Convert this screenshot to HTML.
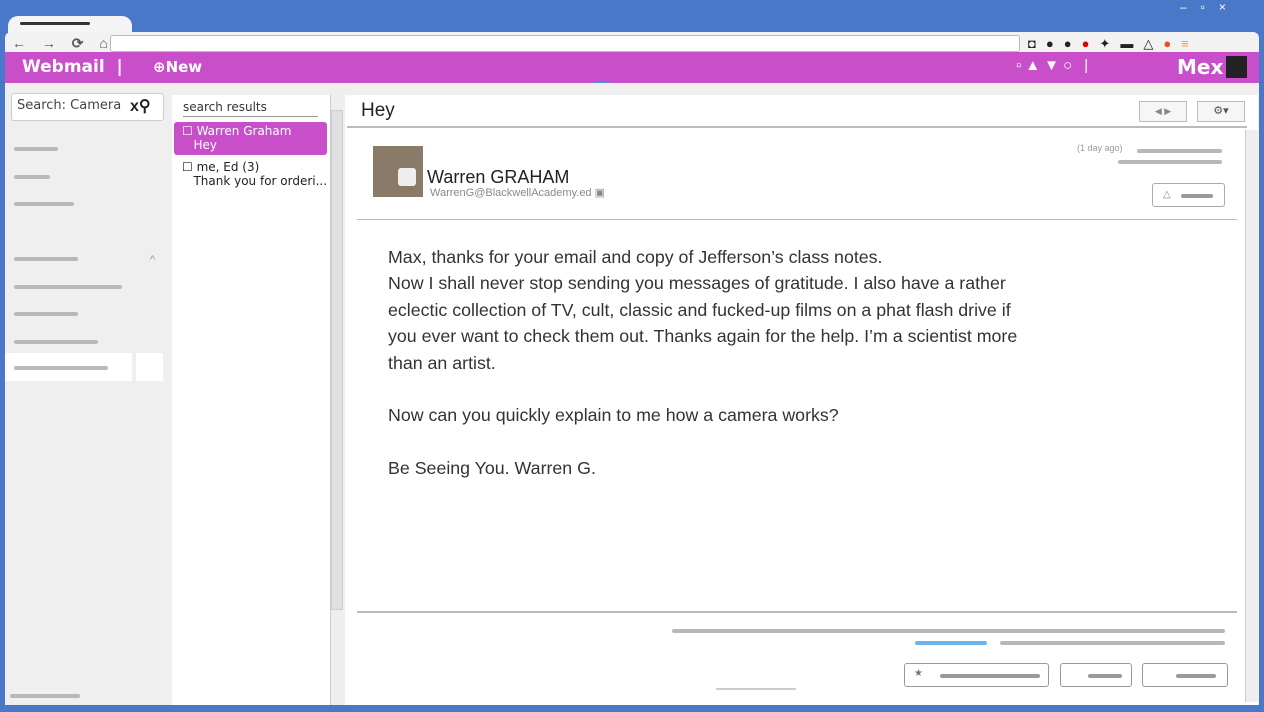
<!DOCTYPE html>
<html><head><style>
*{margin:0;padding:0;box-sizing:border-box}
body{width:1264px;height:712px;background:#4a78c8;position:relative;overflow:hidden;font-family:"Liberation Sans",sans-serif}
.a{position:absolute}
.hand{font-family:"Comic Sans MS","DejaVu Sans",sans-serif}
.g{position:absolute;height:4px;background:#b8b8b8;border-radius:2px}
</style></head><body>
<div class="a" style="left:8px;top:16px;width:124px;height:22px;background:#f4f4f4;border-radius:10px 10px 0 0"></div>
<div class="g" style="left:20px;top:22px;width:70px;background:#333;height:3px"></div>
<div class="a" style="left:5px;top:32px;width:1254px;height:22px;background:#f2f2f2;border-radius:6px 6px 0 0"></div>
<div class="a" style="left:110px;top:35px;width:910px;height:17px;background:#fff;border:1px solid #bbb;border-radius:3px"></div>
<div class="a" style="left:12px;top:35px;font-size:14px;color:#555;font-weight:bold;letter-spacing:6px">← → ⟳ ⌂</div>
<div class="a" style="left:1028px;top:36px;font-size:13px;color:#222;letter-spacing:10px">◘●●<span style="color:#d00">●</span>✦▬△<span style="color:#e05020">●</span><span style="color:#f0a020">≡</span></div>
<div class="a" style="left:1180px;top:0px;font-size:12px;color:#fff;letter-spacing:14px">–▫×</div>
<div class="a" style="left:5px;top:52px;width:1254px;height:31px;background:#c94fca"></div>
<div class="a hand" style="left:22px;top:57px;font-size:17px;color:#fff;font-weight:bold">Webmail &nbsp;|</div>
<div class="a hand" style="left:153px;top:58px;font-size:15px;color:#fff;font-weight:bold">⊕New</div>
<div class="a" style="left:1016px;top:57px;font-size:15px;color:#fff;letter-spacing:4px">▫▲▼○ |</div>
<div class="a hand" style="left:1177px;top:55px;font-size:20px;color:#fff;font-weight:bold">Mex</div>
<div class="a" style="left:1226px;top:56px;width:21px;height:22px;background:#222"></div>
<div class="a" style="left:594px;top:82px;width:15px;height:3px;background:#4a90e0"></div>
<div class="a" style="left:5px;top:83px;width:1254px;height:622px;background:#efefef"></div>
<div class="a" style="left:11px;top:93px;width:153px;height:28px;background:#fff;border:1px solid #ccc;border-radius:3px"></div>
<div class="a hand" style="left:17px;top:98px;font-size:13px;color:#444">Search: Camera</div>
<div class="a" style="left:130px;top:96px;font-size:16px;color:#222;font-weight:bold">x⚲</div>
<div class="g" style="left:14px;top:147px;width:44px"></div>
<div class="g" style="left:14px;top:175px;width:36px"></div>
<div class="g" style="left:14px;top:202px;width:60px"></div>
<div class="g" style="left:14px;top:257px;width:64px"></div>
<div class="g" style="left:14px;top:285px;width:108px"></div>
<div class="g" style="left:14px;top:312px;width:64px"></div>
<div class="g" style="left:14px;top:340px;width:84px"></div>
<div class="a" style="left:150px;top:254px;font-size:11px;color:#999">^</div>
<div class="a" style="left:5px;top:353px;width:127px;height:28px;background:#fff"></div>
<div class="a" style="left:136px;top:353px;width:27px;height:28px;background:#fff"></div>
<div class="g" style="left:14px;top:366px;width:94px"></div>
<div class="g" style="left:10px;top:694px;width:70px"></div>
<div class="a" style="left:172px;top:95px;width:158px;height:610px;background:#fff"></div>
<div class="a hand" style="left:183px;top:100px;font-size:12px;color:#333;width:135px;border-bottom:1px solid #999;padding-bottom:2px">search results</div>
<div class="a" style="left:174px;top:122px;width:153px;height:33px;background:#c94fca;border-radius:3px"></div>
<div class="a hand" style="left:182px;top:124px;font-size:12px;color:#fff;line-height:14px">☐ Warren Graham<br>&nbsp;&nbsp;&nbsp;Hey</div>
<div class="a hand" style="left:182px;top:160px;font-size:12px;color:#222;line-height:14px">☐ me, Ed (3)<br>&nbsp;&nbsp;&nbsp;Thank you for orderi...</div>
<div class="a" style="left:330px;top:95px;width:15px;height:610px;background:#eee;border-left:1px solid #ccc"></div>
<div class="a" style="left:331px;top:110px;width:12px;height:500px;background:#e0e0e0;border:1px solid #ccc"></div>
<div class="a" style="left:345px;top:95px;width:913px;height:610px;background:#fff"></div>
<div class="a" style="left:361px;top:100px;font-size:19px;color:#222">Hey</div>
<div class="a" style="left:347px;top:126px;width:900px;height:2px;background:#bbb"></div>
<div class="a" style="left:1139px;top:101px;width:48px;height:21px;border:1px solid #bbb;background:#f6f6f6;font-size:9px;color:#888;text-align:center;line-height:19px">◀ ▶</div>
<div class="a" style="left:1197px;top:101px;width:48px;height:21px;border:1px solid #bbb;background:#f6f6f6;font-size:11px;color:#555;text-align:center;line-height:19px">⚙▾</div>
<div class="a" style="left:1245px;top:130px;width:13px;height:572px;background:#eee;border-left:1px solid #ccc"></div>
<div class="a" style="left:373px;top:146px;width:50px;height:51px;background:#8a7a68"></div>
<div class="a" style="left:398px;top:168px;width:18px;height:18px;background:#eee;border-radius:3px"></div>
<div class="a" style="left:427px;top:167px;font-size:18px;color:#222">Warren GRAHAM</div>
<div class="a" style="left:430px;top:186px;font-size:11px;color:#888">WarrenG@BlackwellAcademy.ed ▣</div>
<div class="a" style="left:1077px;top:143px;font-size:9px;color:#999">(1 day ago)</div>
<div class="g" style="left:1137px;top:149px;width:85px"></div>
<div class="g" style="left:1118px;top:160px;width:104px"></div>
<div class="a" style="left:1152px;top:183px;width:73px;height:24px;border:1px solid #aaa;border-radius:3px;font-size:10px;color:#888;padding:5px 10px">△</div>
<div class="g" style="left:1181px;top:194px;width:32px;background:#999"></div>
<div class="a" style="left:357px;top:219px;width:880px;height:1px;background:#bbb"></div>
<div class="a" style="left:388px;top:244px;font-size:17.8px;line-height:26.4px;color:#333;width:650px">Max, thanks for your email and copy of Jefferson’s class notes.<br>Now I shall never stop sending you messages of gratitude. I also have a rather<br>eclectic collection of TV, cult, classic and fucked-up films on a phat flash drive if<br>you ever want to check them out. Thanks again for the help. I’m a scientist more<br>than an artist.<br><br>Now can you quickly explain to me how a camera works?<br><br>Be Seeing You. Warren G.</div>
<div class="a" style="left:357px;top:611px;width:880px;height:2px;background:#bbb"></div>
<div class="g" style="left:672px;top:629px;width:553px"></div>
<div class="g" style="left:915px;top:641px;width:72px;background:#6ab4ee"></div>
<div class="g" style="left:1000px;top:641px;width:225px"></div>
<div class="a" style="left:904px;top:663px;width:145px;height:24px;border:1px solid #999;border-radius:3px"></div>
<div class="a" style="left:1060px;top:663px;width:72px;height:24px;border:1px solid #999;border-radius:3px"></div>
<div class="a" style="left:1142px;top:663px;width:86px;height:24px;border:1px solid #999;border-radius:3px"></div>
<div class="g" style="left:940px;top:674px;width:100px;background:#999"></div>
<div class="g" style="left:1088px;top:674px;width:34px;background:#999"></div>
<div class="g" style="left:1176px;top:674px;width:40px;background:#999"></div>
<div class="a" style="left:914px;top:668px;font-size:10px;color:#777">★</div>
<div class="g" style="left:716px;top:688px;width:80px;height:2px;background:#ccc"></div>
</body></html>
